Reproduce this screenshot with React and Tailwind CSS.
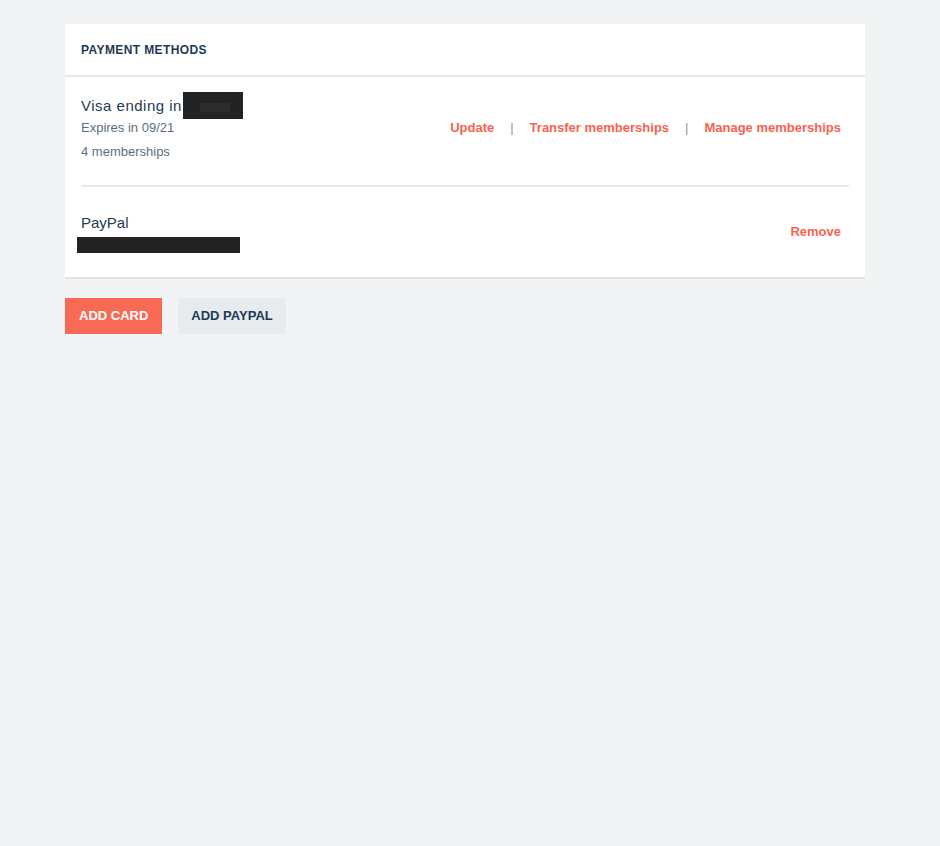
export default function App() {
  const font = { fontFamily: '"Liberation Sans", Arial, sans-serif' };
  return (
    <div className="min-h-[846px] w-full bg-[#f2f3f5] pt-6 pl-[65px]" style={font}>
      <div className="w-[800px] bg-white border-b-2 border-[#dfe4e9]">
        <div className="h-[53px] border-b-2 border-[#e6eaee] px-4 flex items-center">
          <span className="text-[12px] font-bold tracking-[0.4px] text-[#1d3a55]">PAYMENT METHODS</span>
        </div>
        <div className="px-4">
          <div className="flex items-center justify-between pt-[17px] pb-[23px] border-b-2 border-[#e6eaee]">
            <div>
              <div className="flex items-center h-6 text-[15px] text-[#1d3a55]">
                <span className="tracking-[0.5px]">Visa ending in</span>
                <span className="relative -mt-[2px] ml-[1px] inline-block w-[60px] h-[27px] bg-[#232323]">
                  <span className="absolute left-[17px] top-[11px] w-[30px] h-[9px] bg-[#2c2c2c]" />
                </span>
              </div>
              <div className="text-[13px] leading-5 text-[#5b6f82]">Expires in 09/21</div>
              <div className="mt-1 text-[13px] leading-5 text-[#5b6f82]">4 memberships</div>
            </div>
            <div className="flex items-center gap-4 pr-2 text-[13px] font-bold text-[#f7634f]">
              <span>Update</span>
              <span className="font-normal text-[#8b9aa8]">|</span>
              <span>Transfer memberships</span>
              <span className="font-normal text-[#8b9aa8]">|</span>
              <span>Manage memberships</span>
            </div>
          </div>
          <div className="flex items-center justify-between py-6">
            <div>
              <div className="h-6 leading-6 text-[15px] text-[#1d3a55]">PayPal</div>
              <div className="-ml-1 mt-[2px] w-[163px] h-4 bg-[#232323]" />
            </div>
            <div className="pr-2 text-[13px] font-bold text-[#f7634f]">Remove</div>
          </div>
        </div>
      </div>
      <div className="mt-[19px] flex gap-4">
        <button className="h-9 px-[14px] bg-[#f96a55] text-white text-[13px] font-bold">ADD CARD</button>
        <button className="h-9 px-[13px] bg-[#e6ebef] text-[#1d3a55] text-[13px] font-bold">ADD PAYPAL</button>
      </div>
    </div>
  );
}
